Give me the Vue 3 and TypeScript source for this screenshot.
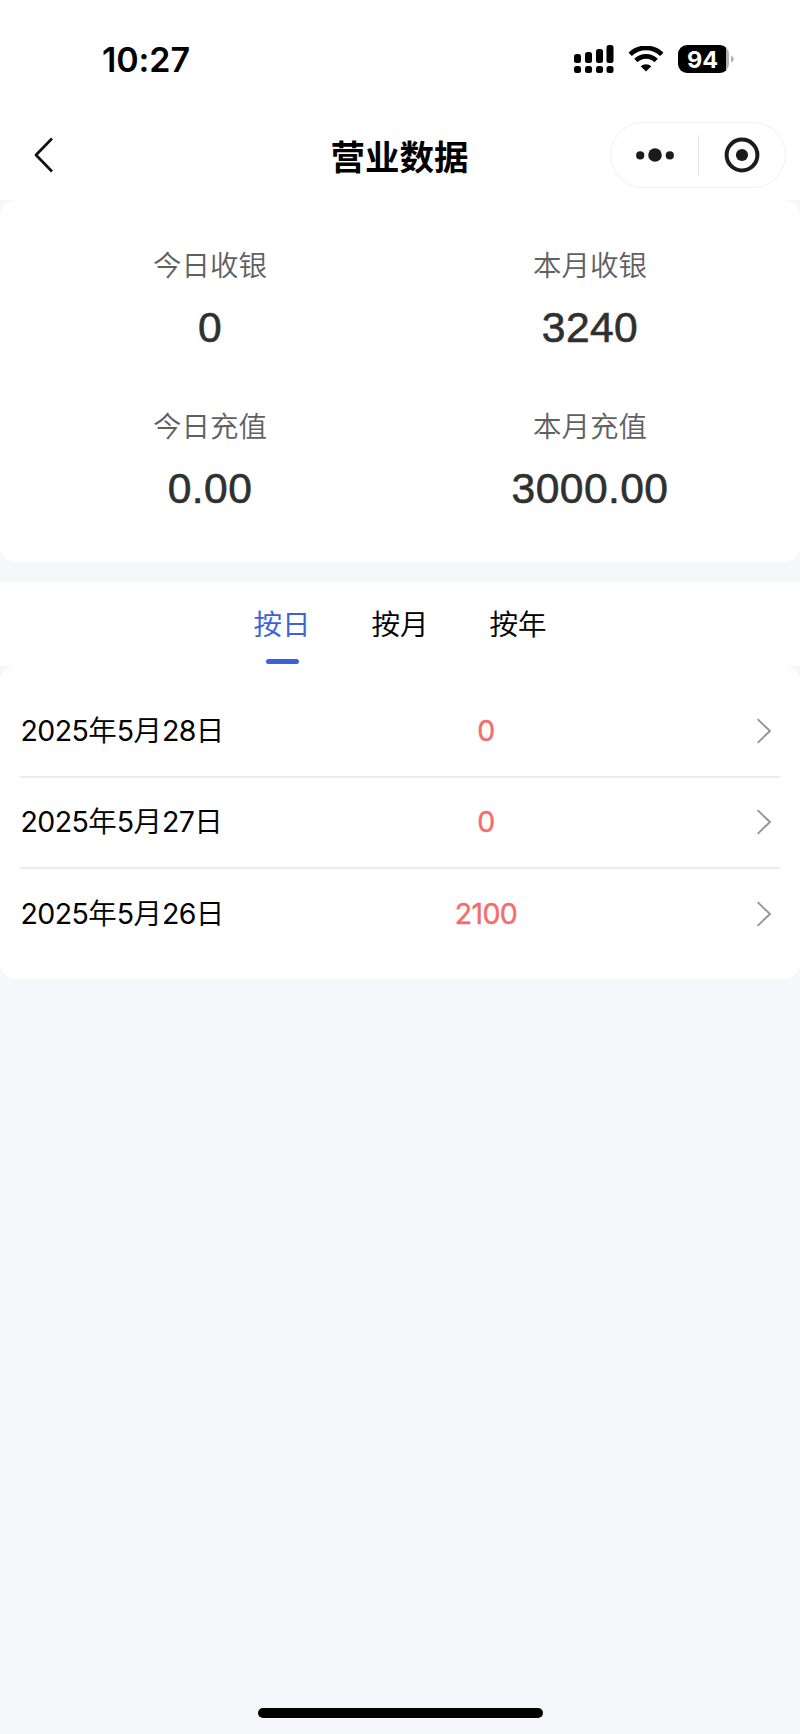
<script setup lang="ts">
interface Stat { label: string; value: string }
interface Row { parts: string[]; amount: string }

const stats: Stat[] = [
  { label: '今日收银', value: '0' },
  { label: '本月收银', value: '3240' },
  { label: '今日充值', value: '0.00' },
  { label: '本月充值', value: '3000.00' },
]
const tabs: string[] = ['按日', '按月', '按年']
const activeTab = '按日'
const rows: Row[] = [
  { parts: ['2025', '年', '5', '月', '28', '日'], amount: '0' },
  { parts: ['2025', '年', '5', '月', '27', '日'], amount: '0' },
  { parts: ['2025', '年', '5', '月', '26', '日'], amount: '2100' },
]
</script>

<template>
  <div class="page">
    <header class="top">
      <div class="status">
        <span class="time">10:27</span>
        <div class="indicators">
          <svg class="signal" width="40" height="29" viewBox="0 0 40 29">
            <rect x="0" y="9" width="7" height="9" rx="2.5" />
            <rect x="11" y="7" width="7" height="11" rx="2.5" />
            <rect x="22" y="4" width="7" height="14" rx="2.5" />
            <rect x="32.5" y="0" width="7" height="18" rx="2.5" />
            <rect x="0" y="21" width="7" height="7" rx="2.5" />
            <rect x="11" y="21" width="7" height="7" rx="2.5" />
            <rect x="22" y="21" width="7" height="7" rx="2.5" />
            <rect x="32.5" y="21" width="7" height="7" rx="2.5" />
          </svg>
          <svg class="wifi" width="36" height="26" viewBox="0 0 36 26">
            <path d="M2.2 8.4a22.5 22.5 0 0 1 31.6 0" fill="none" stroke="#000" stroke-width="4.8" />
            <path d="M7.8 14.5a14.6 14.6 0 0 1 20.4 0" fill="none" stroke="#000" stroke-width="4.6" />
            <path d="M18 25.6l-5.3-5.3a7.6 7.6 0 0 1 10.6 0z" />
          </svg>
          <div class="battery"><span class="level">94</span></div>
          <svg class="nub" width="3" height="8" viewBox="0 0 3 8"><path d="M0 0.5Q2.8 2 2.8 4T0 7.5z" fill="#b3b3b3" /></svg>
        </div>
      </div>
      <nav class="nav">
        <svg class="back" width="20" height="36" viewBox="0 0 20 36">
          <path d="M18 1.5L2 18l16 16.5" fill="none" stroke="#111" stroke-width="2.7" stroke-linejoin="round" />
        </svg>
        <h1 class="title">营业数据</h1>
        <div class="capsule">
          <svg class="dots" width="38" height="14" viewBox="0 0 38 14">
            <circle cx="4.2" cy="7.4" r="4.1" /><circle cx="19" cy="7" r="6.8" /><circle cx="33.8" cy="7.4" r="4.1" />
          </svg>
          <i class="split"></i>
          <svg class="target" width="36" height="36" viewBox="0 0 36 36">
            <circle cx="18" cy="18" r="15.4" fill="none" stroke="#1b1b1b" stroke-width="4" /><circle cx="18" cy="18" r="6.1" />
          </svg>
        </div>
      </nav>
    </header>

    <section class="stats">
      <div v-for="s in stats" :key="s.label" class="stat">
        <span class="label">{{ s.label }}</span>
        <span class="value">{{ s.value }}</span>
      </div>
    </section>

    <div class="tabs">
      <span v-for="t in tabs" :key="t" class="tab" :class="{ active: t === activeTab }">{{ t }}</span>
    </div>

    <section class="list">
      <div v-for="(r, i) in rows" :key="i" class="row">
        <span class="date"><span v-for="(p, k) in r.parts" :key="k" :class="k % 2 === 0 ? 'num' : 'unit'">{{ p }}</span></span>
        <span class="amount">{{ r.amount }}</span>
        <svg class="arrow" width="16" height="26" viewBox="0 0 16 26">
          <path d="M1.6 1.2L14 13 1.6 24.8" fill="none" stroke="#929292" stroke-width="1.8" stroke-linejoin="round" />
        </svg>
      </div>
    </section>

    <i class="home"></i>
  </div>
</template>

<style>
body { margin: 0; background: #f5f7fb; }
</style>

<style scoped>
.page {
  width: 800px;
  height: 1734px;
  box-sizing: border-box;
  padding-bottom: 16px;
  display: flex;
  flex-direction: column;
  background: #f5f7fb;
  color: #000;
  font-family: Inter, "Noto Sans CJK SC", sans-serif;
}
.top { height: 200px; background: #fff; }
.status {
  height: 121px;
  display: flex;
  justify-content: space-between;
  box-sizing: border-box;
  padding: 0 66px 0 102px;
}
.time { font-size: 34px; font-weight: 600; line-height: 120px; letter-spacing: -0.1px; }
.indicators { display: flex; padding-top: 45px; height: 29px; }
.wifi { margin: 1px 0 0 14px; }
.battery {
  margin: 0 2px 0 14px;
  width: 51px;
  height: 28px;
  border-radius: 9px;
  background: linear-gradient(90deg, #000 48px, #b3b3b3 48px);
}
.level {
  display: block;
  width: 49px;
  text-align: center;
  color: #fff;
  font-size: 23.5px;
  font-weight: 700;
  line-height: 29px;
}
.nub { margin-top: 10px; }
.nav {
  height: 67px;
  display: grid;
  grid-template-columns: 189px 1fr 176px;
  align-items: center;
  padding: 0 14px 0 0;
}
.back { margin-left: 34px; margin-bottom: 1px; }
.title {
  margin: 0;
  padding-top: 5px;
  text-align: center;
  font-size: 34.5px;
  line-height: 64px;
  font-weight: 700;
}
.capsule {
  height: 66px;
  margin-bottom: 1px;
  box-sizing: border-box;
  border: 1px solid #f0f0f0;
  border-radius: 33px;
  display: grid;
  grid-template-columns: 87px 1px 86px;
  align-items: center;
  justify-items: center;
  fill: #1b1b1b;
}
.split { width: 1px; height: 41px; background: #e6e6e6; }
.stats {
  height: 362px;
  box-sizing: border-box;
  padding: 41px 20px 0;
  border-radius: 16px;
  background: #fff;
  display: grid;
  grid-template-columns: 1fr 1fr;
  grid-auto-rows: 161px;
}
.stat { display: flex; flex-direction: column; align-items: center; }
.label {
  font-size: 28.5px;
  line-height: 50px;
  color: #606060;
  font-weight: 350;
}
.value {
  margin-top: 11px;
  font-family: "Liberation Sans", Arial, sans-serif;
  font-size: 42.6px;
  line-height: 50px;
  color: #303030;
  letter-spacing: 0.4px;
  -webkit-text-stroke: 0.6px #303030;
}
.tabs {
  margin-top: 20px;
  height: 84px;
  background: #fff;
  display: flex;
  justify-content: center;
  gap: 61px;
}
.tab {
  font-size: 28.5px;
  font-weight: 350;
  -webkit-text-stroke: 0.15px currentColor;
  line-height: 86px;
  height: 84px;
  position: relative;
}
.active { color: #3b62dd; }
.active::after {
  content: "";
  position: absolute;
  left: 50%;
  bottom: 2.5px;
  width: 33px;
  height: 4.5px;
  margin-left: -16px;
  border-radius: 2.5px;
  background: #3b62dd;
}
.list {
  height: 313px;
  box-sizing: border-box;
  padding: 20px 20px 0;
  border-radius: 16px;
  background: #fff;
}
.row {
  height: 91.6px;
  box-sizing: border-box;
  border-bottom: 2px solid #ececec;
  padding-right: 8px;
  display: grid;
  grid-template-columns: 204px 1fr 16px;
  align-items: center;
  font-size: 28.5px;
  line-height: 50px;
}
.row:last-child { border-bottom-color: transparent; }
.date { white-space: nowrap; padding-left: 0.5px; }
.num { letter-spacing: -0.6px; }
.unit { font-weight: 350; -webkit-text-stroke: 0.15px currentColor; }
.amount {
  padding-right: 8px;
  text-align: center;
  letter-spacing: -0.6px;
  color: #f56c6c;
  -webkit-text-stroke: 0.4px #f56c6c;
}
.home { margin: auto auto 0; width: 285px; height: 10.5px; border-radius: 6px; background: #000; }
</style>
